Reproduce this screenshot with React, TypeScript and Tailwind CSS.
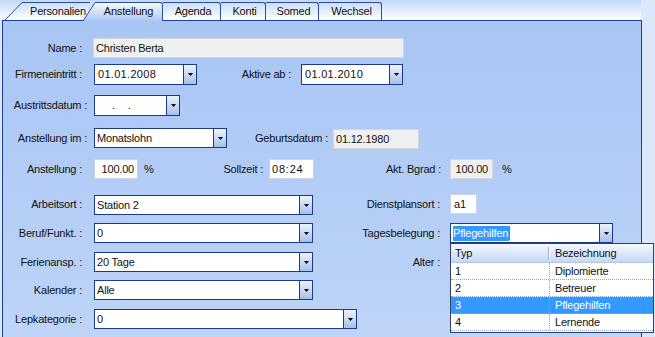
import React from "react";

function Arrow() {
  return (
    <svg width="5" height="3" viewBox="0 0 5 3">
      <path d="M0 0h5L2.5 3z" fill="#000" />
    </svg>
  );
}

function Combo({ className, children }: { className: string; children?: React.ReactNode }) {
  return (
    <div className={`flex border border-[#1b3a8a] bg-white ${className}`}>
      <div className="flex flex-1 items-center overflow-hidden whitespace-nowrap pl-[2px]">{children}</div>
      <div className="flex w-[13px] items-center justify-center border-l border-[#1b3a8a] bg-linear-to-b from-[#eef3fc] to-[#a6c0ea]">
        <Arrow />
      </div>
    </div>
  );
}

function Label({ className, children }: { className: string; children: React.ReactNode }) {
  return <div className={`whitespace-nowrap text-right ${className}`}>{children}</div>;
}

function Box({ className, children }: { className: string; children?: React.ReactNode }) {
  return <div className={`flex items-center whitespace-nowrap border ${className}`}>{children}</div>;
}

function InactiveTab({ w, children }: { w: string; children: React.ReactNode }) {
  return (
    <div
      className={`flex h-[18px] items-center justify-center rounded-tr-[3px] border-t border-r border-[#2b4b9c] pl-[3px] ${w}`}
    >
      {children}
    </div>
  );
}

export default function App() {
  return (
    <div className="relative h-[337px] w-[655px] overflow-hidden bg-[#dbe8fb] font-['Liberation_Sans',Arial,sans-serif] text-[11px] leading-none tracking-[-0.2px] text-[#111]">
      <div className="w-[642px]">
        {/* Tab strip */}
        <div className="flex h-[20px] w-[641px] items-start bg-linear-to-b from-[#c3d8f6] to-[#ffffff] pl-[5px] pt-[2px]">
          {/* Personalien */}
          <div className="flex h-[18px]">
            <svg width="17" height="18" viewBox="0 0 17 18">
              <line x1="0" y1="18" x2="17" y2="0.5" stroke="#2b4b9c" strokeWidth="1" />
            </svg>
            <div className="flex h-[18px] w-[68px] items-center border-t border-[#2b4b9c] pl-[8px]">Personalien</div>
          </div>
          {/* Anstellung (active) */}
          <div className="relative z-10 -ml-[7px] flex h-[19px]">
            <svg width="12" height="19" viewBox="0 0 12 19">
              <defs>
                <linearGradient id="actg" x1="0" y1="0" x2="0" y2="1">
                  <stop offset="0" stopColor="#f7faff" />
                  <stop offset="1" stopColor="#abc7f4" />
                </linearGradient>
              </defs>
              <polygon points="0,19 12,0 12,19" fill="url(#actg)" />
              <line x1="0" y1="19" x2="12" y2="0.5" stroke="#2b4b9c" strokeWidth="1" />
            </svg>
            <div className="flex h-[19px] w-[68px] items-center justify-center rounded-tr-[3px] border-t border-r border-[#2b4b9c] bg-linear-to-b from-[#f7faff] to-[#abc7f4] pb-[1px]">
              Anstellung
            </div>
          </div>
          <InactiveTab w="w-[58px]">Agenda</InactiveTab>
          <InactiveTab w="w-[45px]">Konti</InactiveTab>
          <InactiveTab w="w-[53px]">Somed</InactiveTab>
          <InactiveTab w="w-[63px]">Wechsel</InactiveTab>
        </div>

        {/* Panel */}
        <div className="ml-[2px] flex h-[330px] w-[640px] flex-col border border-[#1d3f9e] bg-linear-to-b from-[#a8c5f4] to-[#bfd5f8]">
          {/* Name */}
          <div className="mt-[17px] flex h-[20px] items-center">
            <Label className="w-[90px] pr-[11px]">Name :</Label>
            <Box className="h-[20px] w-[311px] border-[#d3d6dc] bg-[#f0f0f0] pl-[2px]">Christen Berta</Box>
          </div>

          {/* Firmeneintritt / Aktive ab */}
          <div className="mt-[6px] flex h-[21px] items-center">
            <Label className="w-[91px] pr-[12px]">Firmeneintritt :</Label>
            <Combo className="h-[21px] w-[103px]">
              <span className="pl-[1px] tracking-[0.3px]">01.01.2008</span>
            </Combo>
            <Label className="w-[104px] pr-[10px]">Aktive ab :</Label>
            <Combo className="h-[21px] w-[102px]">
              <span className="pl-[1px] tracking-[0.3px]">01.01.2010</span>
            </Combo>
          </div>

          {/* Austrittsdatum */}
          <div className="mt-[10px] flex h-[21px] items-center">
            <Label className="w-[91px] pr-[7px]">Austrittsdatum :</Label>
            <Combo className="h-[21px] w-[86px]">
              <span className="pl-[15px]">.</span>
              <span className="pl-[13px]">.</span>
            </Combo>
          </div>

          {/* Anstellung im / Geburtsdatum */}
          <div className="mt-[12px] flex h-[21px] items-center">
            <Label className="w-[91px] pr-[7px]">Anstellung im :</Label>
            <Combo className="h-[20px] w-[133px] self-start">Monatslohn</Combo>
            <Label className="w-[106px] pr-[5px]">Geburtsdatum :</Label>
            <Box className="mt-[1px] h-[20px] w-[86px] border-[#d3d6dc] bg-[#f0f0f0] pl-[2px]">01.12.1980</Box>
          </div>

          {/* Anstellung / Sollzeit / Akt. Bgrad */}
          <div className="mt-[10px] flex h-[20px] items-center">
            <Label className="w-[91px] pr-[12px]">Anstellung :</Label>
            <Box className="h-[20px] w-[44px] justify-end border-[#c9d3e4] bg-white pr-[3px]">100.00</Box>
            <span className="w-[20px] pl-[6px]">%</span>
            <Label className="w-[111px] pr-[6px]">Sollzeit :</Label>
            <Box className="h-[20px] w-[45px] border-[#c9d3e4] bg-white pl-[2px]">
              <span className="tracking-[0.8px]">08:24</span>
            </Box>
            <Label className="w-[136px] pr-[9px]">Akt. Bgrad :</Label>
            <Box className="h-[20px] w-[43px] justify-end border-[#d3d6dc] bg-[#f0f0f0] pr-[4px]">100.00</Box>
            <span className="pl-[9px]">%</span>
          </div>

          {/* Arbeitsort / Dienstplansort */}
          <div className="mt-[15px] flex h-[21px] items-center">
            <Label className="w-[91px] pr-[12px]">Arbeitsort :</Label>
            <Combo className="mt-[1px] h-[20px] w-[219px]">Station 2</Combo>
            <Label className="w-[137px] pr-[10px]">Dienstplansort :</Label>
            <Box className="h-[20px] w-[27px] self-start border-[#c9d3e4] bg-white pl-[3px]">a1</Box>
          </div>

          {/* Beruf / Tagesbelegung */}
          <div className="mt-[8px] flex h-[20px] items-center">
            <Label className="w-[91px] pr-[12px]">Beruf/Funkt. :</Label>
            <Combo className="h-[20px] w-[219px]">0</Combo>
            <Label className="w-[137px] pr-[10px]">Tagesbelegung :</Label>
            <Combo className="h-[20px] w-[163px]">
              <span className="flex h-[15px] items-center bg-[#3399ff] pr-[1px] text-white">Pflegehilfen</span>
              <span className="h-[14px] w-[1px] bg-[#c8641e]" />
            </Combo>
          </div>

          {/* Ferienansp / Alter */}
          <div className="mt-[9px] flex h-[20px] items-center">
            <Label className="w-[91px] pr-[12px]">Ferienansp. :</Label>
            <Combo className="h-[20px] w-[219px]">20 Tage</Combo>
            <Label className="w-[137px] pr-[10px]">Alter :</Label>
          </div>

          {/* Kalender */}
          <div className="mt-[8px] flex h-[20px] items-center">
            <Label className="w-[91px] pr-[12px]">Kalender :</Label>
            <Combo className="h-[20px] w-[219px]">Alle</Combo>
          </div>

          {/* Lepkategorie */}
          <div className="mt-[9px] flex h-[20px] items-center">
            <Label className="w-[91px] pr-[12px]">Lepkategorie :</Label>
            <Combo className="h-[20px] w-[263px]">0</Combo>
          </div>
        </div>
      </div>

      {/* Dropdown list overlay */}
      <div className="absolute left-[450px] top-[243px] flex h-[90px] w-[204px] flex-col border border-[#33415e] bg-white">
        <div className="flex h-[19px] items-center border-b border-[#b5c6e2] bg-linear-to-b from-[#f6f9fe] to-[#c6d8f4]">
          <div className="w-[97px] pl-[4px] text-[11px]">Typ</div>
          <div className="h-[13px] w-[1px] bg-[#9fb2d2]" />
          <div className="h-[13px] w-[1px] bg-white" />
          <div className="pl-[5px]">Bezeichnung</div>
        </div>
        {[
          ["1", "Diplomierte", false],
          ["2", "Betreuer", false],
          ["3", "Pflegehilfen", true],
          ["4", "Lernende", false],
        ].map(([n, name, sel]) => (
          <div
            key={n as string}
            className={`flex h-[17px] items-center border-b border-dotted border-[#8ea7d3] ${
              sel ? "bg-[#3399ff] text-white" : ""
            }`}
          >
            <div className="flex h-full w-[99px] items-center border-r border-dotted border-[#8ea7d3] pl-[4px]">
              {n as string}
            </div>
            <div className="pl-[5px]">{name as string}</div>
          </div>
        ))}
      </div>
    </div>
  );
}
